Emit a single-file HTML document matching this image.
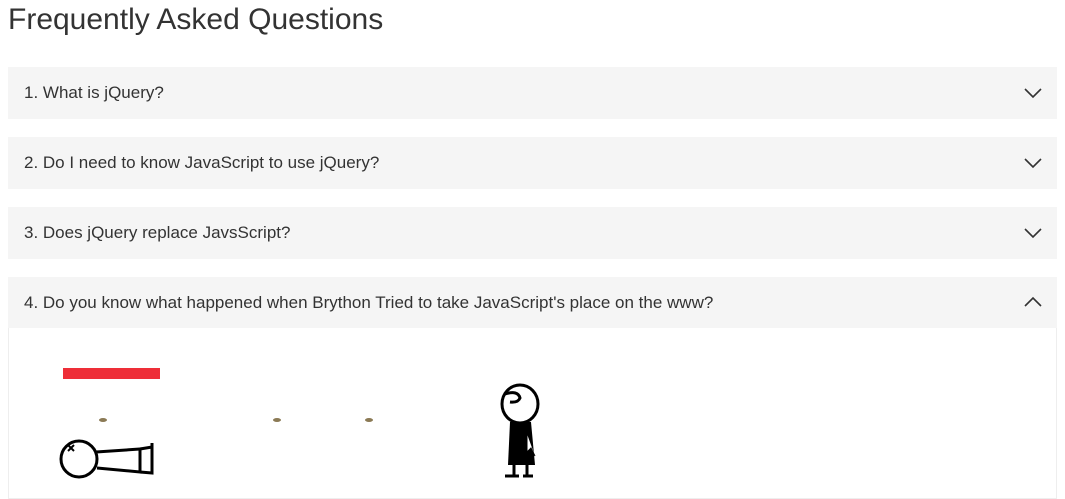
<!DOCTYPE html>
<html><head><style>
body{margin:0;background:#fff;font-family:"Liberation Sans",Arial,sans-serif;width:1065px;height:493px;overflow:hidden;position:relative}
h1{position:absolute;left:8px;top:3px;margin:0;font-weight:normal;font-size:30px;color:#333}
.q{position:absolute;left:8px;width:1049px;height:52px;background:#f5f5f5;font-size:17px;color:#333;line-height:52px}
.q span{position:absolute;left:16px}
.q svg{position:absolute;left:1015px;top:18px}
.body{position:absolute;left:8px;top:328px;width:1047px;height:170px;border:1px solid #eee;border-top:none}
</style></head><body>
<h1>Frequently Asked Questions</h1>
<div class="q" style="top:67px"><span>1. What is jQuery?</span><svg width="20" height="14"><path d="M2 4 L10 12 L18 4" fill="none" stroke="#333" stroke-width="1.6"/></svg></div>
<div class="q" style="top:137px"><span>2. Do I need to know JavaScript to use jQuery?</span><svg width="20" height="14"><path d="M2 4 L10 12 L18 4" fill="none" stroke="#333" stroke-width="1.6"/></svg></div>
<div class="q" style="top:207px"><span>3. Does jQuery replace JavsScript?</span><svg width="20" height="14"><path d="M2 4 L10 12 L18 4" fill="none" stroke="#333" stroke-width="1.6"/></svg></div>
<div class="q" style="top:277px;height:51px"><span>4. Do you know what happened when Brython Tried to take JavaScript's place on the www?</span><svg width="20" height="14"><path d="M2 11 L10 3 L18 11" fill="none" stroke="#333" stroke-width="1.6"/></svg></div>
<div class="body"></div>
<svg style="position:absolute;left:0;top:330px" width="620" height="163">
<rect x="63" y="38" width="97" height="11" fill="#ee2e38"/>
<ellipse cx="103" cy="90" rx="4" ry="2" fill="#8b7a55"/>
<ellipse cx="277" cy="90" rx="4" ry="2" fill="#8b7a55"/>
<ellipse cx="369" cy="90" rx="4" ry="2" fill="#8b7a55"/>
<g fill="none" stroke="#000" stroke-width="3">
<circle cx="79" cy="129" r="18"/>
<path d="M96 122 L140 119 L140 142 L97 138"/>
<path d="M140 119 L152 117 L152 143 L140 142 M152 117 L152 113"/>
<path d="M68 115 L74 121 M74 115 L68 121" stroke-width="2"/>
<ellipse cx="520" cy="74" rx="18" ry="19"/>
<path d="M505 64 Q518 60 520 68 Q518 73 510 72"/>
</g>
<path d="M510 92 L531 92 L535 135 L508 135 Z" fill="#000"/>
<path d="M514 135 L514 145 M527 135 L527 145 M505 146 L519 146 M523 146 L533 146" stroke="#000" stroke-width="3"/>
<path d="M527 104 L527 122 L531 118 L535 126" fill="#fff" stroke="#000" stroke-width="1"/>
</svg>
</body></html>
